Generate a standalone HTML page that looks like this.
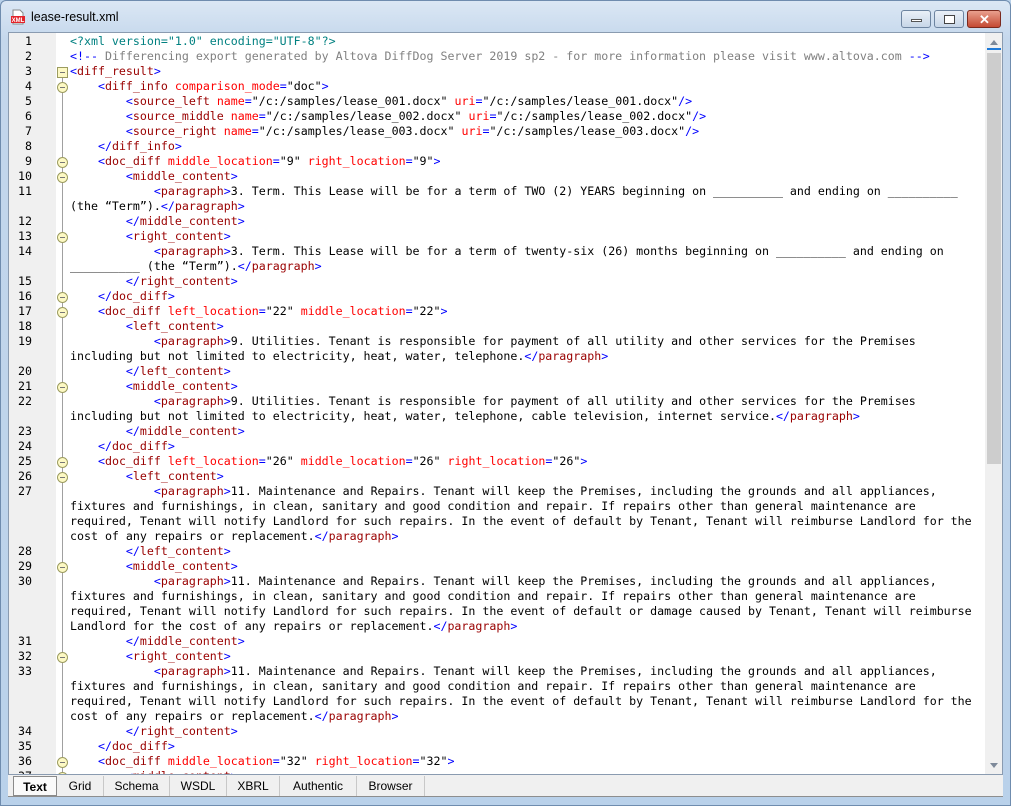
<!DOCTYPE html>
<html><head><meta charset="utf-8"><style>
*{margin:0;padding:0;box-sizing:border-box}
body{width:1011px;height:806px;overflow:hidden;background:#b9d1ea;font-family:"Liberation Sans",sans-serif;position:relative}
#frame{position:absolute;left:0;top:0;width:1011px;height:806px;background:linear-gradient(#dbe7f4,#c4d7ec 40px,#b9d1ea);border:1px solid #6f8cae;border-radius:6px 6px 0 0}
#title{position:absolute;left:31px;top:10px;font-size:12.5px;color:#000}
#icon{position:absolute;left:10px;top:9px;width:16px;height:16px}
.btn{position:absolute;top:10px;height:18px;border:1px solid #6d84a0;border-radius:3px;background:linear-gradient(#e9f0f8,#c7d6e8)}
#ed{position:absolute;left:8px;top:32px;width:995px;height:743px;background:#fff;border:1px solid #8a9bb0;overflow:hidden}
#gut{position:absolute;left:0;top:0;width:47px;height:743px;background:#f0f0f0}
#sb{position:absolute;left:976px;top:0;width:18px;height:743px;background:#f0f0f0}
#thumb{position:absolute;left:2px;top:20px;width:14px;height:411px;background:#cdcdcd}
.r{position:absolute;left:61px;height:15px;line-height:15px;font-family:"DejaVu Sans Mono","Liberation Mono",monospace;font-size:11.62px;white-space:pre;color:#000}
.n{position:absolute;left:0;width:23px;text-align:right;height:15px;line-height:15px;font-family:"DejaVu Sans Mono",monospace;font-size:11.62px;color:#000}
.t{color:#0000ff}.e{color:#990000}.a{color:#ff0000}.c{color:#808080}.p{color:#008080}
.f{position:absolute;left:48px;width:11px;height:11px;border-radius:50%;border:1px solid #9c9c60;background:#fdf9c4}
.f:after{content:"";position:absolute;left:2px;top:4px;width:5px;height:1px;background:#777}
#tabs{position:absolute;left:8px;top:775px;width:995px;height:22px;background:#f0f0f0;border-bottom:1px solid #8e8e8e}
.tab{position:absolute;top:1px;height:20px;line-height:21px;font-size:12px;text-align:center;border-right:1px solid #c8c8c8;color:#000}
</style></head><body>
<div id="frame"></div>
<svg id="icon" viewBox="0 0 16 16"><path d="M3 1h7l3 3v11H3z" fill="#fff" stroke="#888"/><rect x="1" y="7" width="14" height="7" fill="#e3242b"/><text x="8" y="13" font-size="6" fill="#fff" text-anchor="middle" font-family="Liberation Sans" font-weight="bold">XML</text></svg>
<div id="title">lease-result.xml</div>
<div class="btn" style="left:901px;width:30px"><div style="position:absolute;left:9px;top:8px;width:11px;height:3px;background:#fff;border:1px solid #555"></div></div>
<div class="btn" style="left:934px;width:30px"><div style="position:absolute;left:9px;top:4px;width:11px;height:9px;border:1px solid #444;background:#fff"></div></div>
<div class="btn" style="left:967px;width:34px;background:linear-gradient(#e9a08e,#c44a33);border-color:#7b2a1e"><div style="position:absolute;left:11px;top:0;color:#fff;font-weight:bold;font-size:13px;line-height:17px">✕</div></div>
<div id="ed">
<div id="gut"></div>
<div style="position:absolute;left:53px;top:36px;width:1px;height:707px;background:#a0a0a0"></div>
<div id="sb"><div style="position:absolute;left:5px;top:7px;border:4px solid transparent;border-bottom:5px solid #7e8a9a;border-top:0"></div><div style="position:absolute;left:2px;top:15px;width:14px;height:2px;background:#1e7ad8"></div><div id="thumb"></div><div style="position:absolute;left:5px;top:730px;border:4px solid transparent;border-top:5px solid #7e8a9a;border-bottom:0"></div></div>
<div style="position:absolute;left:48px;top:34px;width:11px;height:11px;border:1px solid #9c9c60;background:#fdf9c4"><div style="position:absolute;left:2px;top:4px;width:5px;height:1px;background:#777"></div></div>
<div class="f" style="top:49px"></div><div class="f" style="top:124px"></div><div class="f" style="top:139px"></div><div class="f" style="top:199px"></div><div class="f" style="top:259px"></div><div class="f" style="top:274px"></div><div class="f" style="top:349px"></div><div class="f" style="top:424px"></div><div class="f" style="top:439px"></div><div class="f" style="top:529px"></div><div class="f" style="top:619px"></div><div class="f" style="top:724px"></div><div class="f" style="top:739px"></div>
<div class="n" style="top:1px">1</div><div class="n" style="top:16px">2</div><div class="n" style="top:31px">3</div><div class="n" style="top:46px">4</div><div class="n" style="top:61px">5</div><div class="n" style="top:76px">6</div><div class="n" style="top:91px">7</div><div class="n" style="top:106px">8</div><div class="n" style="top:121px">9</div><div class="n" style="top:136px">10</div><div class="n" style="top:151px">11</div><div class="n" style="top:181px">12</div><div class="n" style="top:196px">13</div><div class="n" style="top:211px">14</div><div class="n" style="top:241px">15</div><div class="n" style="top:256px">16</div><div class="n" style="top:271px">17</div><div class="n" style="top:286px">18</div><div class="n" style="top:301px">19</div><div class="n" style="top:331px">20</div><div class="n" style="top:346px">21</div><div class="n" style="top:361px">22</div><div class="n" style="top:391px">23</div><div class="n" style="top:406px">24</div><div class="n" style="top:421px">25</div><div class="n" style="top:436px">26</div><div class="n" style="top:451px">27</div><div class="n" style="top:511px">28</div><div class="n" style="top:526px">29</div><div class="n" style="top:541px">30</div><div class="n" style="top:601px">31</div><div class="n" style="top:616px">32</div><div class="n" style="top:631px">33</div><div class="n" style="top:691px">34</div><div class="n" style="top:706px">35</div><div class="n" style="top:721px">36</div><div class="n" style="top:736px">37</div>
<div class="r" style="top:1px"><span class="p">&lt;?xml version="1.0" encoding="UTF-8"?&gt;</span></div>
<div class="r" style="top:16px"><span class="t">&lt;!--</span><span class="c"> Differencing export generated by Altova DiffDog Server 2019 sp2 - for more information please visit www.altova.com </span><span class="t">--&gt;</span></div>
<div class="r" style="top:31px"><span class="t">&lt;</span><span class="e">diff_result</span><span class="t">&gt;</span></div>
<div class="r" style="top:46px">    <span class="t">&lt;</span><span class="e">diff_info</span> <span class="a">comparison_mode</span><span class="t">=</span>"doc"<span class="t">&gt;</span></div>
<div class="r" style="top:61px">        <span class="t">&lt;</span><span class="e">source_left</span> <span class="a">name</span><span class="t">=</span>"/c:/samples/lease_001.docx" <span class="a">uri</span><span class="t">=</span>"/c:/samples/lease_001.docx"<span class="t">/&gt;</span></div>
<div class="r" style="top:76px">        <span class="t">&lt;</span><span class="e">source_middle</span> <span class="a">name</span><span class="t">=</span>"/c:/samples/lease_002.docx" <span class="a">uri</span><span class="t">=</span>"/c:/samples/lease_002.docx"<span class="t">/&gt;</span></div>
<div class="r" style="top:91px">        <span class="t">&lt;</span><span class="e">source_right</span> <span class="a">name</span><span class="t">=</span>"/c:/samples/lease_003.docx" <span class="a">uri</span><span class="t">=</span>"/c:/samples/lease_003.docx"<span class="t">/&gt;</span></div>
<div class="r" style="top:106px">    <span class="t">&lt;/</span><span class="e">diff_info</span><span class="t">&gt;</span></div>
<div class="r" style="top:121px">    <span class="t">&lt;</span><span class="e">doc_diff</span> <span class="a">middle_location</span><span class="t">=</span>"9" <span class="a">right_location</span><span class="t">=</span>"9"<span class="t">&gt;</span></div>
<div class="r" style="top:136px">        <span class="t">&lt;</span><span class="e">middle_content</span><span class="t">&gt;</span></div>
<div class="r" style="top:151px">            <span class="t">&lt;</span><span class="e">paragraph</span><span class="t">&gt;</span>3. Term. This Lease will be for a term of TWO (2) YEARS beginning on __________ and ending on __________</div>
<div class="r" style="top:166px">(the “Term”).<span class="t">&lt;/</span><span class="e">paragraph</span><span class="t">&gt;</span></div>
<div class="r" style="top:181px">        <span class="t">&lt;/</span><span class="e">middle_content</span><span class="t">&gt;</span></div>
<div class="r" style="top:196px">        <span class="t">&lt;</span><span class="e">right_content</span><span class="t">&gt;</span></div>
<div class="r" style="top:211px">            <span class="t">&lt;</span><span class="e">paragraph</span><span class="t">&gt;</span>3. Term. This Lease will be for a term of twenty-six (26) months beginning on __________ and ending on</div>
<div class="r" style="top:226px">__________ (the “Term”).<span class="t">&lt;/</span><span class="e">paragraph</span><span class="t">&gt;</span></div>
<div class="r" style="top:241px">        <span class="t">&lt;/</span><span class="e">right_content</span><span class="t">&gt;</span></div>
<div class="r" style="top:256px">    <span class="t">&lt;/</span><span class="e">doc_diff</span><span class="t">&gt;</span></div>
<div class="r" style="top:271px">    <span class="t">&lt;</span><span class="e">doc_diff</span> <span class="a">left_location</span><span class="t">=</span>"22" <span class="a">middle_location</span><span class="t">=</span>"22"<span class="t">&gt;</span></div>
<div class="r" style="top:286px">        <span class="t">&lt;</span><span class="e">left_content</span><span class="t">&gt;</span></div>
<div class="r" style="top:301px">            <span class="t">&lt;</span><span class="e">paragraph</span><span class="t">&gt;</span>9. Utilities. Tenant is responsible for payment of all utility and other services for the Premises</div>
<div class="r" style="top:316px">including but not limited to electricity, heat, water, telephone.<span class="t">&lt;/</span><span class="e">paragraph</span><span class="t">&gt;</span></div>
<div class="r" style="top:331px">        <span class="t">&lt;/</span><span class="e">left_content</span><span class="t">&gt;</span></div>
<div class="r" style="top:346px">        <span class="t">&lt;</span><span class="e">middle_content</span><span class="t">&gt;</span></div>
<div class="r" style="top:361px">            <span class="t">&lt;</span><span class="e">paragraph</span><span class="t">&gt;</span>9. Utilities. Tenant is responsible for payment of all utility and other services for the Premises</div>
<div class="r" style="top:376px">including but not limited to electricity, heat, water, telephone, cable television, internet service.<span class="t">&lt;/</span><span class="e">paragraph</span><span class="t">&gt;</span></div>
<div class="r" style="top:391px">        <span class="t">&lt;/</span><span class="e">middle_content</span><span class="t">&gt;</span></div>
<div class="r" style="top:406px">    <span class="t">&lt;/</span><span class="e">doc_diff</span><span class="t">&gt;</span></div>
<div class="r" style="top:421px">    <span class="t">&lt;</span><span class="e">doc_diff</span> <span class="a">left_location</span><span class="t">=</span>"26" <span class="a">middle_location</span><span class="t">=</span>"26" <span class="a">right_location</span><span class="t">=</span>"26"<span class="t">&gt;</span></div>
<div class="r" style="top:436px">        <span class="t">&lt;</span><span class="e">left_content</span><span class="t">&gt;</span></div>
<div class="r" style="top:451px">            <span class="t">&lt;</span><span class="e">paragraph</span><span class="t">&gt;</span>11. Maintenance and Repairs. Tenant will keep the Premises, including the grounds and all appliances,</div>
<div class="r" style="top:466px">fixtures and furnishings, in clean, sanitary and good condition and repair. If repairs other than general maintenance are</div>
<div class="r" style="top:481px">required, Tenant will notify Landlord for such repairs. In the event of default by Tenant, Tenant will reimburse Landlord for the</div>
<div class="r" style="top:496px">cost of any repairs or replacement.<span class="t">&lt;/</span><span class="e">paragraph</span><span class="t">&gt;</span></div>
<div class="r" style="top:511px">        <span class="t">&lt;/</span><span class="e">left_content</span><span class="t">&gt;</span></div>
<div class="r" style="top:526px">        <span class="t">&lt;</span><span class="e">middle_content</span><span class="t">&gt;</span></div>
<div class="r" style="top:541px">            <span class="t">&lt;</span><span class="e">paragraph</span><span class="t">&gt;</span>11. Maintenance and Repairs. Tenant will keep the Premises, including the grounds and all appliances,</div>
<div class="r" style="top:556px">fixtures and furnishings, in clean, sanitary and good condition and repair. If repairs other than general maintenance are</div>
<div class="r" style="top:571px">required, Tenant will notify Landlord for such repairs. In the event of default or damage caused by Tenant, Tenant will reimburse</div>
<div class="r" style="top:586px">Landlord for the cost of any repairs or replacement.<span class="t">&lt;/</span><span class="e">paragraph</span><span class="t">&gt;</span></div>
<div class="r" style="top:601px">        <span class="t">&lt;/</span><span class="e">middle_content</span><span class="t">&gt;</span></div>
<div class="r" style="top:616px">        <span class="t">&lt;</span><span class="e">right_content</span><span class="t">&gt;</span></div>
<div class="r" style="top:631px">            <span class="t">&lt;</span><span class="e">paragraph</span><span class="t">&gt;</span>11. Maintenance and Repairs. Tenant will keep the Premises, including the grounds and all appliances,</div>
<div class="r" style="top:646px">fixtures and furnishings, in clean, sanitary and good condition and repair. If repairs other than general maintenance are</div>
<div class="r" style="top:661px">required, Tenant will notify Landlord for such repairs. In the event of default by Tenant, Tenant will reimburse Landlord for the</div>
<div class="r" style="top:676px">cost of any repairs or replacement.<span class="t">&lt;/</span><span class="e">paragraph</span><span class="t">&gt;</span></div>
<div class="r" style="top:691px">        <span class="t">&lt;/</span><span class="e">right_content</span><span class="t">&gt;</span></div>
<div class="r" style="top:706px">    <span class="t">&lt;/</span><span class="e">doc_diff</span><span class="t">&gt;</span></div>
<div class="r" style="top:721px">    <span class="t">&lt;</span><span class="e">doc_diff</span> <span class="a">middle_location</span><span class="t">=</span>"32" <span class="a">right_location</span><span class="t">=</span>"32"<span class="t">&gt;</span></div>
<div class="r" style="top:736px">        <span class="t">&lt;</span><span class="e">middle_content</span><span class="t">&gt;</span></div>
</div>
<div id="tabs">
<div class="tab" style="left:5px;width:44px;font-weight:bold;background:#fafafa;border:1px solid #8a8a8a">Text</div>
<div class="tab" style="left:49px;width:47px">Grid</div>
<div class="tab" style="left:96px;width:66px">Schema</div>
<div class="tab" style="left:162px;width:57px">WSDL</div>
<div class="tab" style="left:219px;width:53px">XBRL</div>
<div class="tab" style="left:272px;width:77px">Authentic</div>
<div class="tab" style="left:349px;width:68px">Browser</div>
</div>
</body></html>
